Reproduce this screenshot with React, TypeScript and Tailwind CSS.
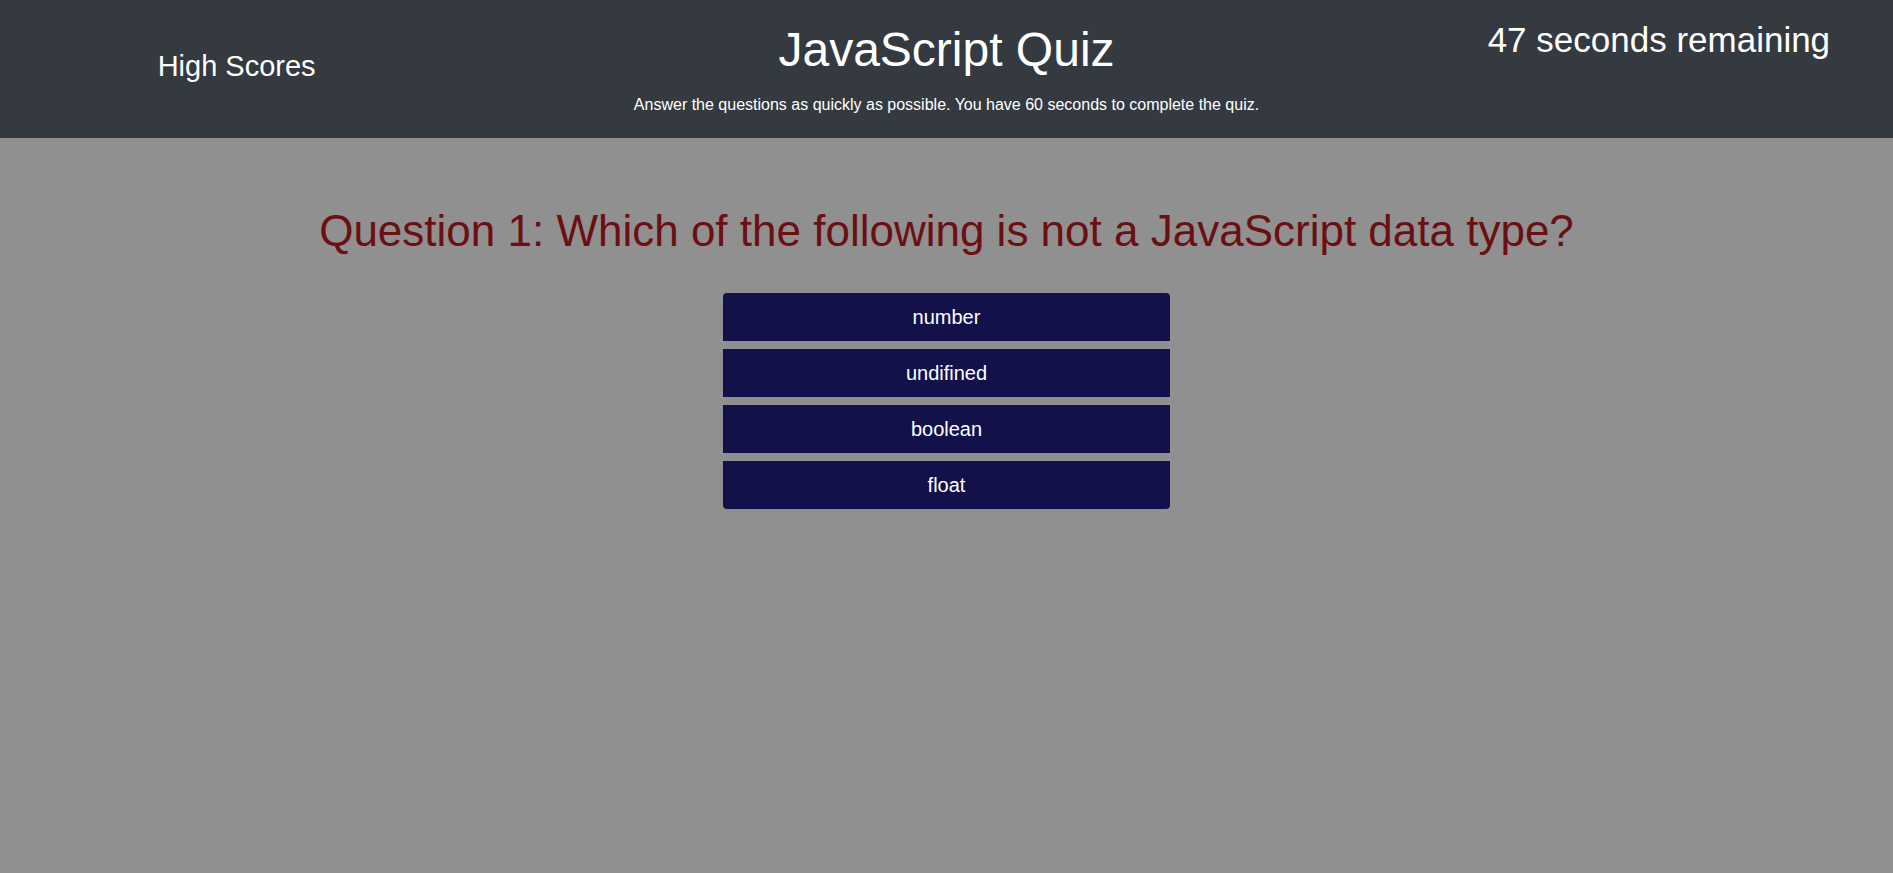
import React from "react";

const answers = ["number", "undifined", "boolean", "float"];

export default function App() {
  return (
    <div className="min-h-screen w-full bg-[#909090] font-['Liberation_Sans',sans-serif]">
      <header className="grid h-[138px] grid-cols-4 bg-[#343a40] text-white">
        <div className="flex items-start justify-center pt-[48px]">
          <a className="text-[29px] leading-[36px]">High Scores</a>
        </div>
        <div className="col-span-2 flex flex-col items-center pt-[21px]">
          <h1 className="text-[48px] leading-[58px]">JavaScript Quiz</h1>
          <p className="mt-[16px] text-[16px] leading-[20px]">
            Answer the questions as quickly as possible. You have 60 seconds to complete the quiz.
          </p>
        </div>
        <div className="flex items-start justify-center pl-[5px] pt-[20px]">
          <span className="text-[35px] leading-[40px]">47 seconds remaining</span>
        </div>
      </header>
      <main className="flex flex-col items-center pt-[67px]">
        <h2 className="text-[44px] leading-[52px] text-[#6b0f12]">
          Question 1: Which of the following is not a JavaScript data type?
        </h2>
        <div className="mt-[36px] flex w-[447px] flex-col gap-[8px]">
          {answers.map((a, i) => (
            <button
              key={a}
              className={`h-[48px] w-full bg-[#13114a] text-[20px] text-white ${
                i === 0 ? "rounded-t-[4px]" : ""
              } ${i === answers.length - 1 ? "rounded-b-[4px]" : ""}`}
            >
              {a}
            </button>
          ))}
        </div>
      </main>
    </div>
  );
}
